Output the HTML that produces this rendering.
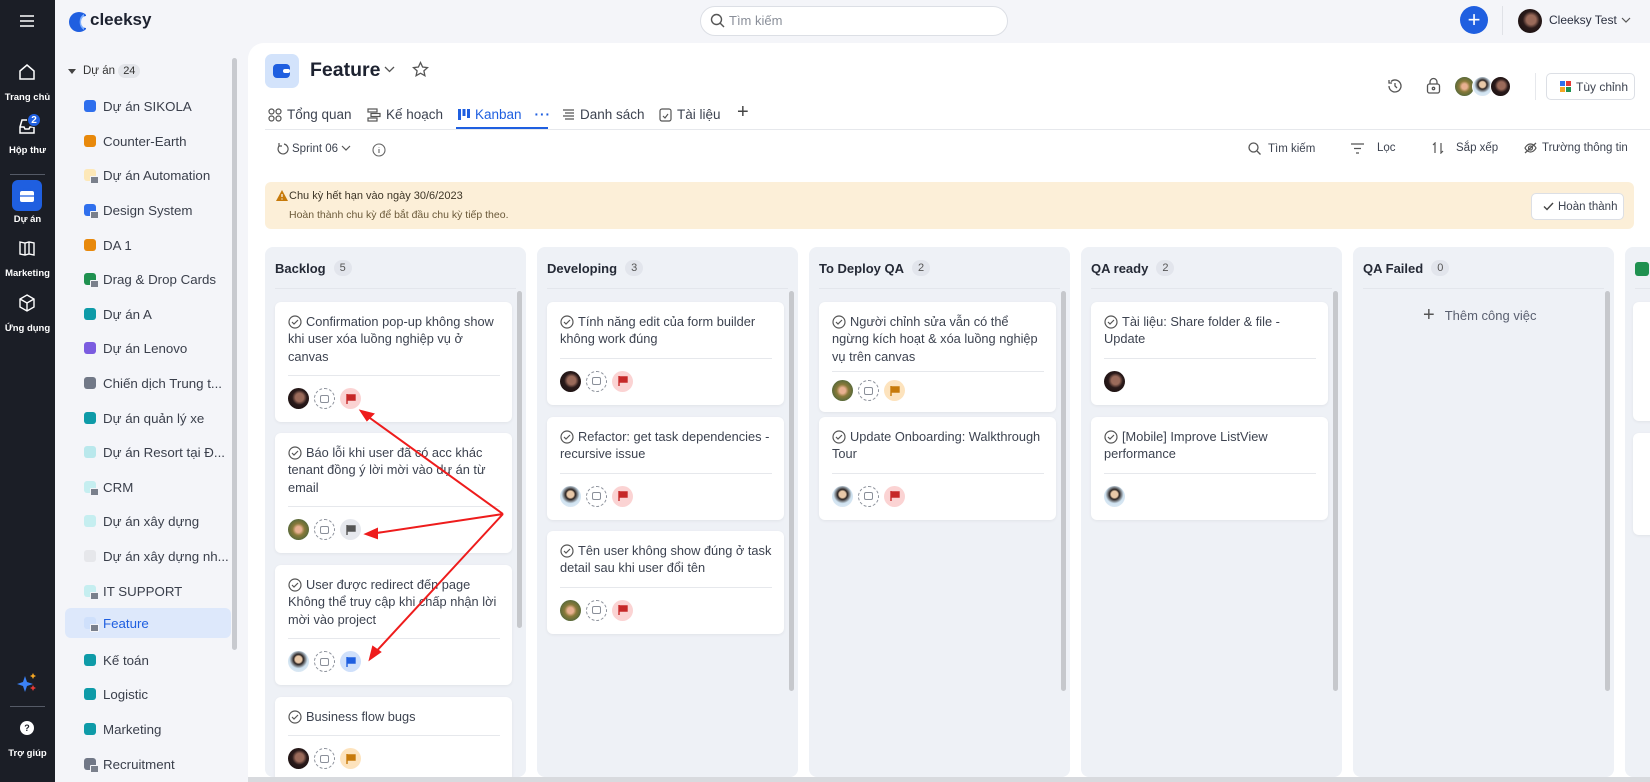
<!DOCTYPE html>
<html><head><meta charset="utf-8">
<style>
*{box-sizing:border-box;margin:0;padding:0}
body{width:1650px;height:782px;overflow:hidden;background:#f4f5f9;font-family:"Liberation Sans","Noto Sans CJK SC",sans-serif;color:#2b3040;position:relative}
.abs{position:absolute}
.dark{left:0;top:0;width:55px;height:782px;background:#1b1e26}
.nav{position:absolute;left:0;width:55px;text-align:center;color:#fff;font-size:9.5px;font-weight:bold}
.proj{position:absolute;left:65px;width:166px;height:30px;display:flex;align-items:center;font-size:13.3px;color:#3a3f4b}
.sq{width:12px;height:12px;border-radius:3px;margin-left:19px;margin-right:7px;position:relative;flex:none}
.sq.l:after{content:"";position:absolute;right:-3px;bottom:-3px;width:7px;height:6px;background:#7a808c;border-radius:1px;border:1px solid #f4f5f9}
.main{left:248px;top:43px;width:1402px;height:739px;background:#fff;border-top-left-radius:16px}
.tab{position:absolute;top:107px;font-size:13.5px;color:#3d4350;display:flex;align-items:center;gap:5px}
.tool{position:absolute;top:142px;font-size:11.5px;color:#3d4350;display:flex;align-items:center;gap:7px}
.col{position:absolute;top:247px;width:261px;height:530px;background:#eef1f6;border-radius:8px;overflow:hidden}
.colh{position:absolute;left:10px;top:13px;font-size:13px;font-weight:bold;color:#252a36;display:flex;align-items:center;gap:8px}
.cnt{background:#e2e5ec;border-radius:10px;font-size:11px;font-weight:normal;color:#555;padding:2px 6px}
.cdiv{position:absolute;left:10px;right:10px;top:41px;height:1px;background:#e3e6ec}
.sb{position:absolute;right:4px;width:5px;background:#c6c8cc;border-radius:3px}
.card{position:absolute;left:10px;width:237px;background:#fff;border-radius:6px;box-shadow:0 1px 3px rgba(0,0,0,.06);padding:11px 12px 13px 13px;overflow:hidden}
.t{font-size:12.8px;line-height:17.4px;color:#3d4350}
.t svg{vertical-align:-3px;margin-right:4px}
.hr{height:1px;background:#e6e8ec;margin:10px 0 12px}
.ic{display:flex;gap:5px;height:21px}
.av{width:21px;height:21px;border-radius:50%}
.a1{background:radial-gradient(circle at 55% 45%,#9a6a5a 0 25%,#2a1a1a 45%,#120c0c)}
.a2{background:radial-gradient(circle at 50% 40%,#e8c8a8 0 20%,#2a2220 30%,#cfe2f0 55%,#e8f0f8)}
.a3{background:radial-gradient(circle at 50% 50%,#e8b090 0 20%,#8a7a3a 40%,#5a6a3a 70%,#a08060)}
.cal{width:21px;height:21px;border-radius:50%;border:1.3px dashed #8a8f99;display:flex;align-items:center;justify-content:center}
.cal i{width:9px;height:8px;border:1.2px solid #8a8f99;border-radius:2px;display:block}
.fl{width:21px;height:21px;border-radius:50%;display:flex;align-items:center;justify-content:center}
.red{background:#fbd3d3}.gray{background:#e6e8ed}.blue{background:#cfe0fb}.yel{background:#fde3bd}
</style></head><body>
<div class="abs dark"></div>
<svg class="abs" style="left:19px;top:14px" width="16" height="14"><path d="M1 2h14M1 7h14M1 12h14" stroke="#fff" stroke-width="1.6"/></svg>
<svg class="abs" style="left:18px;top:63px" width="18" height="18" fill="none" stroke="#fff" stroke-width="1.5"><path d="M2 8L9 2l7 6v8H2z"/></svg>
<div class="nav" style="top:92px">Trang chủ</div>
<svg class="abs" style="left:18px;top:118px" width="18" height="18" fill="none" stroke="#fff" stroke-width="1.5"><path d="M2 9l2-7h10l2 7v6H2zM2 9h4l1 2h4l1-2h4"/></svg>
<div class="abs" style="left:27px;top:113px;width:14px;height:14px;border-radius:50%;background:#1f5fe0;color:#fff;font-size:10px;font-weight:bold;text-align:center;line-height:14px;border:1px solid #1b1e26">2</div>
<div class="nav" style="top:145px">Hộp thư</div>
<div class="abs" style="left:10px;top:174px;width:35px;height:1px;background:#555a66"></div>
<div class="abs" style="left:12px;top:180px;width:30px;height:31px;border-radius:6px;background:#1f5fe0"></div>
<svg class="abs" style="left:19px;top:188px" width="16" height="15"><rect x="1" y="3" width="14" height="11" rx="2" fill="#fff"/><path d="M5 3V1h6v2M1 8h14" stroke="#1f5fe0" stroke-width="1.3" fill="none"/></svg>
<div class="nav" style="top:214px">Dự án</div>
<svg class="abs" style="left:18px;top:239px" width="18" height="18" fill="none" stroke="#fff" stroke-width="1.4"><path d="M2 3l5 1 4-1 5 1v12l-5-1-4 1-5-1zM7 4v12M11 3v12"/></svg>
<div class="nav" style="top:268px">Marketing</div>
<svg class="abs" style="left:18px;top:294px" width="18" height="18" fill="none" stroke="#fff" stroke-width="1.4"><path d="M9 1l7 4v8l-7 4-7-4V5zM2 5l7 4 7-4M9 9v8"/></svg>
<div class="nav" style="top:323px">Ứng dụng</div>
<svg class="abs" style="left:16px;top:672px" width="22" height="22"><path d="M9 4l2 6 6 2-6 2-2 6-2-6-6-2 6-2z" fill="#3b82f6"/><path d="M17 1l1 2 2 1-2 1-1 2-1-2-2-1 2-1z" fill="#f5a623"/><path d="M17 13l1 2 2 1-2 1-1 2-1-2-2-1 2-1z" fill="#e53935"/></svg>
<div class="abs" style="left:10px;top:706px;width:35px;height:1px;background:#555a66"></div>
<div class="abs" style="left:20px;top:721px;width:14px;height:14px;border-radius:50%;background:#fff;color:#1b1e26;font-size:9px;font-weight:bold;text-align:center;line-height:14px">?</div>
<div class="nav" style="top:748px">Trợ giúp</div>

<svg class="abs" style="left:68px;top:10px" width="18" height="24"><circle cx="11" cy="12" r="10" fill="#1f5fe0"/><path d="M16 4a8 9 0 0 0 0 16z" fill="#7fb0ff"/><path d="M18 6a5 6 0 0 0 0 12z" fill="#f4f5f9"/></svg>
<div class="abs" style="left:90px;top:10px;font-size:17px;font-weight:bold;color:#1d2230">cleeksy</div>
<div class="abs" style="left:700px;top:6px;width:308px;height:30px;border:1px solid #dcdfe5;border-radius:15px;background:#fff"></div>
<svg class="abs" style="left:710px;top:13px" width="15" height="15" fill="none" stroke="#555" stroke-width="1.4"><circle cx="6.5" cy="6.5" r="5"/><path d="M10 10l4 4"/></svg>
<div class="abs" style="left:729px;top:13px;font-size:13px;color:#8a8f99">Tìm kiếm</div>
<div class="abs" style="left:1460px;top:6px;width:28px;height:28px;border-radius:50%;background:#1f5fe0;color:#fff;font-size:22px;text-align:center;line-height:27px">+</div>
<div class="abs" style="left:1502px;top:6px;width:1px;height:29px;background:#e0e2e7"></div>
<div class="abs av a1" style="left:1518px;top:9px;width:24px;height:24px"></div>
<div class="abs" style="left:1549px;top:13px;font-size:12px;color:#2b3040">Cleeksy Test</div>
<svg class="abs" style="left:1621px;top:16px" width="10" height="8" fill="none" stroke="#555" stroke-width="1.2"><path d="M1 2l4 4 4-4"/></svg>

<svg class="abs" style="left:68px;top:69px" width="8" height="6"><path d="M0 0h8L4 5z" fill="#444"/></svg>
<div class="abs" style="left:83px;top:65px;font-size:11.5px;color:#333">Dự án <span style="background:#e3e5ea;border-radius:8px;padding:1px 5px;font-size:11px">24</span></div>
<div class="abs" style="left:232px;top:58px;width:5px;height:592px;background:#c8cacf;border-radius:3px"></div>
<div class="abs" style="left:65px;top:608px;width:166px;height:30px;background:#dde8fb;border-radius:6px"></div>

<div class="proj" style="top:91px"><span class="sq" style="background:#2f6fed"></span>Dự án SIKOLA</div>
<div class="proj" style="top:126px"><span class="sq" style="background:#e8890c"></span>Counter-Earth</div>
<div class="proj" style="top:160px"><span class="sq l" style="background:#fde8b8"></span>Dự án Automation</div>
<div class="proj" style="top:195px"><span class="sq l" style="background:#2f6fed"></span>Design System</div>
<div class="proj" style="top:230px"><span class="sq" style="background:#e8890c"></span>DA 1</div>
<div class="proj" style="top:264px"><span class="sq l" style="background:#1f9150"></span>Drag &amp; Drop Cards</div>
<div class="proj" style="top:299px"><span class="sq" style="background:#0e9ba8"></span>Dự án A</div>
<div class="proj" style="top:333px"><span class="sq" style="background:#7b5ce0"></span>Dự án Lenovo</div>
<div class="proj" style="top:368px"><span class="sq" style="background:#717887"></span>Chiến dịch Trung t...</div>
<div class="proj" style="top:403px"><span class="sq" style="background:#0e9ba8"></span>Dự án quản lý xe</div>
<div class="proj" style="top:437px"><span class="sq" style="background:#b9e8ec"></span>Dự án Resort tại Đ...</div>
<div class="proj" style="top:472px"><span class="sq l" style="background:#c5eef0"></span>CRM</div>
<div class="proj" style="top:506px"><span class="sq" style="background:#c5eef0"></span>Dự án xây dựng</div>
<div class="proj" style="top:541px"><span class="sq" style="background:#e6e7eb"></span>Dự án xây dựng nh...</div>
<div class="proj" style="top:576px"><span class="sq l" style="background:#c5eef0"></span>IT SUPPORT</div>
<div class="proj" style="top:608px;color:#1f5fe0"><span class="sq l" style="background:#cfe0fb"></span>Feature</div>
<div class="proj" style="top:645px"><span class="sq" style="background:#0e9ba8"></span>Kế toán</div>
<div class="proj" style="top:679px"><span class="sq" style="background:#0e9ba8"></span>Logistic</div>
<div class="proj" style="top:714px"><span class="sq" style="background:#0e9ba8"></span>Marketing</div>
<div class="proj" style="top:749px"><span class="sq l" style="background:#717887"></span>Recruitment</div>

<div class="abs main"></div>
<div class="abs" style="left:265px;top:54px;width:34px;height:34px;border-radius:7px;background:#d3e3fb"></div>
<svg class="abs" style="left:272px;top:62px" width="20" height="18"><rect x="1" y="2" width="17" height="14" rx="4" fill="#1f5fe0"/><rect x="11" y="7" width="7" height="4" rx="2" fill="#fff"/></svg>
<div class="abs" style="left:310px;top:59px;font-size:19.5px;font-weight:bold;color:#1d2230">Feature</div>
<svg class="abs" style="left:384px;top:66px" width="11" height="8" fill="none" stroke="#555" stroke-width="1.3"><path d="M1 1l4.5 4.5L10 1"/></svg>
<svg class="abs" style="left:412px;top:61px" width="17" height="17" fill="none" stroke="#555" stroke-width="1.3"><path d="M8.5 1.5l2.1 4.5 4.9.6-3.6 3.3 1 4.8-4.4-2.5-4.4 2.5 1-4.8L1.5 6.6l4.9-.6z"/></svg>

<svg class="abs" style="left:1387px;top:78px" width="16" height="16" fill="none" stroke="#555" stroke-width="1.3"><path d="M2 8a6 6 0 1 0 2-4.5M2 2v3h3M8 5v3l2 2"/></svg>
<svg class="abs" style="left:1426px;top:77px" width="15" height="17" fill="none" stroke="#555" stroke-width="1.3"><rect x="1.5" y="7" width="12" height="9" rx="2"/><path d="M4 7V5a3.5 3.5 0 0 1 7 0v2"/><circle cx="7.5" cy="11.5" r="1.2"/></svg>
<div class="abs av a3" style="left:1454px;top:76px;width:21px;height:21px;border:1px solid #fff"></div>
<div class="abs av a2" style="left:1472px;top:76px;width:21px;height:21px;border:1px solid #fff"></div>
<div class="abs av a1" style="left:1490px;top:76px;width:21px;height:21px;border:1px solid #fff"></div>
<div class="abs" style="left:1535px;top:73px;width:1px;height:27px;background:#e6e8ec"></div>
<div class="abs" style="left:1546px;top:73px;width:89px;height:27px;border:1px solid #dcdfe5;border-radius:5px;font-size:12px;color:#3d4350;display:flex;align-items:center;gap:5px;padding-left:13px">
<svg width="11" height="11"><rect width="5" height="5" fill="#2f6fed"/><rect x="6" width="5" height="5" fill="#e53935"/><rect y="6" width="5" height="5" fill="#f5a623"/><rect x="6" y="6" width="5" height="5" fill="#1f9150"/></svg>Tùy chỉnh</div>

<div class="tab" style="left:268px"><svg width="14" height="14" fill="none" stroke="#555" stroke-width="1.2"><circle cx="3.5" cy="3.5" r="2.5"/><circle cx="10.5" cy="3.5" r="2.5"/><circle cx="3.5" cy="10.5" r="2.5"/><circle cx="10.5" cy="10.5" r="2.5"/></svg>Tổng quan</div>
<div class="tab" style="left:367px"><svg width="14" height="14" fill="none" stroke="#555" stroke-width="1.2"><rect x="1" y="1" width="9" height="3"/><rect x="4" y="5.5" width="9" height="3"/><rect x="1" y="10" width="9" height="3"/></svg>Kế hoạch</div>
<div class="tab" style="left:458px;color:#1f5fe0"><svg width="12" height="13"><rect x="0" y="1" width="3" height="11" fill="#1f5fe0"/><rect x="4.5" y="1" width="3" height="7" fill="#1f5fe0"/><rect x="9" y="1" width="3" height="9" fill="#1f5fe0"/></svg>Kanban<span style="margin-left:8px;font-weight:bold;letter-spacing:1px">···</span></div>
<div class="abs" style="left:456px;top:127px;width:92px;height:2px;background:#1f5fe0"></div>
<div class="tab" style="left:562px"><svg width="13" height="14" fill="none" stroke="#555" stroke-width="1.2"><path d="M1 2h11M3 5h9M1 8h11M3 11h9"/></svg>Danh sách</div>
<div class="tab" style="left:659px"><svg width="13" height="14" fill="none" stroke="#555" stroke-width="1.2"><rect x="1" y="1" width="11" height="12" rx="2"/><path d="M4 8l2 2 3-4"/></svg>Tài liệu</div>
<div class="tab" style="left:737px;font-size:20px;top:101px;color:#444">+</div>
<div class="abs" style="left:265px;top:129px;width:1385px;height:1px;background:#e6e8ec"></div>

<div class="tool" style="left:276px;gap:3px"><svg width="13" height="13" fill="none" stroke="#555" stroke-width="1.2"><path d="M3 4a5 5 0 1 0 5-2M3 1v3h3"/></svg>Sprint 06 <svg width="10" height="7" fill="none" stroke="#555" stroke-width="1.2"><path d="M1 1l4 4 4-4"/></svg></div>
<svg class="abs" style="left:372px;top:143px" width="14" height="14" fill="none" stroke="#666" stroke-width="1.1"><circle cx="7" cy="7" r="6"/><path d="M7 6v4M7 4v.5"/></svg>
<div class="tool" style="left:1248px"><svg width="13" height="13" fill="none" stroke="#555" stroke-width="1.3"><circle cx="5.5" cy="5.5" r="4.5"/><path d="M9 9l3.5 3.5"/></svg>Tìm kiếm</div>
<div class="tool" style="left:1351px;gap:13px"><svg width="13" height="11" fill="none" stroke="#555" stroke-width="1.3"><path d="M0 1h13M3 5.5h7M5 10h3"/></svg>Lọc</div>
<div class="tool" style="left:1432px;gap:12px"><svg width="12" height="12" fill="none" stroke="#555" stroke-width="1.2"><path d="M3 11V1L1 3M9 1v10l2-2"/></svg>Sắp xếp</div>
<div class="tool" style="left:1524px;gap:5px"><svg width="13" height="12" fill="none" stroke="#555" stroke-width="1.2"><path d="M1 6s2-4 5.5-4S12 6 12 6s-2 4-5.5 4S1 6 1 6z"/><circle cx="6.5" cy="6" r="2"/><path d="M1 11L12 1"/></svg>Trường thông tin</div>

<div class="abs" style="left:265px;top:182px;width:1369px;height:47px;background:#fcefd8;border-radius:6px"></div>
<svg class="abs" style="left:276px;top:190px" width="12" height="11"><path d="M6 0l6 11H0z" fill="#c77a0a"/><path d="M6 4v3M6 8.5v1" stroke="#fff" stroke-width="1.2"/></svg>
<div class="abs" style="left:289px;top:190px;font-size:11px;color:#3d3526">Chu kỳ hết hạn vào ngày 30/6/2023</div>
<div class="abs" style="left:289px;top:209px;font-size:10.5px;color:#6b5a3a">Hoàn thành chu kỳ để bắt đầu chu kỳ tiếp theo.</div>
<div class="abs" style="left:1531px;top:193px;width:93px;height:27px;background:#fff;border:1px solid #dcdfe5;border-radius:5px;font-size:11.5px;color:#3d4350;display:flex;align-items:center;padding-left:11px;gap:4px"><svg width="11" height="9" fill="none" stroke="#444" stroke-width="1.4"><path d="M1 4.5l3 3L10 1"/></svg>Hoàn thành</div>

<div class="col" style="left:265px"><div class="colh">Backlog <span class="cnt">5</span></div><div class="cdiv"></div><div class="sb" style="top:44px;height:337px"></div>
<div class="card" style="top:55px"><div class="t"><svg width="14" height="14" fill="none" stroke="#555" stroke-width="1.2"><circle cx="7" cy="7" r="6"/><path d="M4 7l2 2 4-4"/></svg>Confirmation pop-up không show khi user xóa luồng nghiệp vụ ở canvas</div><div class="hr"></div><div class="ic"><div class="av a1"></div><div class="cal"><i></i></div><div class="fl red"><svg width="10" height="10"><path d="M1 0v10M1 1h8v5H1" fill="#c62828" stroke="#c62828" stroke-width="1.4"/></svg></div></div></div>
<div class="card" style="top:186px"><div class="t"><svg width="14" height="14" fill="none" stroke="#555" stroke-width="1.2"><circle cx="7" cy="7" r="6"/><path d="M4 7l2 2 4-4"/></svg>Báo lỗi khi user đã có acc khác tenant đồng ý lời mời vào dự án từ email</div><div class="hr"></div><div class="ic"><div class="av a3"></div><div class="cal"><i></i></div><div class="fl gray"><svg width="10" height="10"><path d="M1 0v10M1 1h8v5H1" fill="#555" stroke="#555" stroke-width="1.4"/></svg></div></div></div>
<div class="card" style="top:318px"><div class="t"><svg width="14" height="14" fill="none" stroke="#555" stroke-width="1.2"><circle cx="7" cy="7" r="6"/><path d="M4 7l2 2 4-4"/></svg>User được redirect đến page Không thể truy cập khi chấp nhận lời mời vào project</div><div class="hr"></div><div class="ic"><div class="av a2"></div><div class="cal"><i></i></div><div class="fl blue"><svg width="10" height="10"><path d="M1 0v10M1 1h8v5H1" fill="#1f5fe0" stroke="#1f5fe0" stroke-width="1.4"/></svg></div></div></div>
<div class="card" style="top:450px"><div class="t"><svg width="14" height="14" fill="none" stroke="#555" stroke-width="1.2"><circle cx="7" cy="7" r="6"/><path d="M4 7l2 2 4-4"/></svg>Business flow bugs</div><div class="hr"></div><div class="ic"><div class="av a1"></div><div class="cal"><i></i></div><div class="fl yel"><svg width="10" height="10"><path d="M1 0v10M1 1h8v5H1" fill="#c77a0a" stroke="#c77a0a" stroke-width="1.4"/></svg></div></div></div>
</div>

<div class="col" style="left:537px"><div class="colh">Developing <span class="cnt">3</span></div><div class="cdiv"></div><div class="sb" style="top:44px;height:400px"></div>
<div class="card" style="top:55px"><div class="t"><svg width="14" height="14" fill="none" stroke="#555" stroke-width="1.2"><circle cx="7" cy="7" r="6"/><path d="M4 7l2 2 4-4"/></svg>Tính năng edit của form builder không work đúng</div><div class="hr"></div><div class="ic"><div class="av a1"></div><div class="cal"><i></i></div><div class="fl red"><svg width="10" height="10"><path d="M1 0v10M1 1h8v5H1" fill="#c62828" stroke="#c62828" stroke-width="1.4"/></svg></div></div></div>
<div class="card" style="top:170px"><div class="t"><svg width="14" height="14" fill="none" stroke="#555" stroke-width="1.2"><circle cx="7" cy="7" r="6"/><path d="M4 7l2 2 4-4"/></svg>Refactor: get task dependencies - recursive issue</div><div class="hr"></div><div class="ic"><div class="av a2"></div><div class="cal"><i></i></div><div class="fl red"><svg width="10" height="10"><path d="M1 0v10M1 1h8v5H1" fill="#c62828" stroke="#c62828" stroke-width="1.4"/></svg></div></div></div>
<div class="card" style="top:284px"><div class="t"><svg width="14" height="14" fill="none" stroke="#555" stroke-width="1.2"><circle cx="7" cy="7" r="6"/><path d="M4 7l2 2 4-4"/></svg>Tên user không show đúng ở task detail sau khi user đổi tên</div><div class="hr"></div><div class="ic"><div class="av a3"></div><div class="cal"><i></i></div><div class="fl red"><svg width="10" height="10"><path d="M1 0v10M1 1h8v5H1" fill="#c62828" stroke="#c62828" stroke-width="1.4"/></svg></div></div></div>
</div>

<div class="col" style="left:809px"><div class="colh">To Deploy QA <span class="cnt">2</span></div><div class="cdiv"></div><div class="sb" style="top:44px;height:400px"></div>
<div class="card" style="top:55px;height:110px"><div class="t"><svg width="14" height="14" fill="none" stroke="#555" stroke-width="1.2"><circle cx="7" cy="7" r="6"/><path d="M4 7l2 2 4-4"/></svg>Người chỉnh sửa vẫn có thể ngừng kích hoạt &amp; xóa luồng nghiệp vụ trên canvas</div><div class="hr" style="margin:6px 0 8px"></div><div class="ic"><div class="av a3"></div><div class="cal"><i></i></div><div class="fl yel"><svg width="10" height="10"><path d="M1 0v10M1 1h8v5H1" fill="#c77a0a" stroke="#c77a0a" stroke-width="1.4"/></svg></div></div></div>
<div class="card" style="top:170px"><div class="t"><svg width="14" height="14" fill="none" stroke="#555" stroke-width="1.2"><circle cx="7" cy="7" r="6"/><path d="M4 7l2 2 4-4"/></svg>Update Onboarding: Walkthrough Tour</div><div class="hr"></div><div class="ic"><div class="av a2"></div><div class="cal"><i></i></div><div class="fl red"><svg width="10" height="10"><path d="M1 0v10M1 1h8v5H1" fill="#c62828" stroke="#c62828" stroke-width="1.4"/></svg></div></div></div>
</div>

<div class="col" style="left:1081px"><div class="colh">QA ready <span class="cnt">2</span></div><div class="cdiv"></div><div class="sb" style="top:44px;height:400px"></div>
<div class="card" style="top:55px"><div class="t"><svg width="14" height="14" fill="none" stroke="#555" stroke-width="1.2"><circle cx="7" cy="7" r="6"/><path d="M4 7l2 2 4-4"/></svg>Tài liệu: Share folder &amp; file - Update</div><div class="hr"></div><div class="ic"><div class="av a1"></div></div></div>
<div class="card" style="top:170px"><div class="t"><svg width="14" height="14" fill="none" stroke="#555" stroke-width="1.2"><circle cx="7" cy="7" r="6"/><path d="M4 7l2 2 4-4"/></svg>[Mobile] Improve ListView performance</div><div class="hr"></div><div class="ic"><div class="av a2"></div></div></div>
</div>

<div class="col" style="left:1353px"><div class="colh">QA Failed <span class="cnt">0</span></div><div class="cdiv"></div><div class="sb" style="top:44px;height:400px"></div>
<div class="abs" style="left:70px;top:57px;font-size:13px;color:#5a6070;display:flex;align-items:center;gap:10px"><span style="font-size:20px;color:#555">+</span>Thêm công việc</div>
</div>

<div class="col" style="left:1625px;width:40px"><div class="abs" style="left:10px;top:15px;width:14px;height:14px;border-radius:3px;background:#1f9150"></div><div class="cdiv"></div>
<div class="card" style="top:55px;left:8px;height:119px"></div><div class="card" style="top:186px;left:8px;height:102px"></div></div>

<div class="abs" style="left:248px;top:777px;width:1402px;height:5px;background:#d8dade"></div>

<svg class="abs" style="left:0;top:0;pointer-events:none" width="1650" height="782">
<g stroke="#ee1c1c" stroke-width="2" fill="#ee1c1c">
<path d="M503 514L363 413M503 514L370 534M503 514L372 656" fill="none"/>
<path d="M361 411l12 3-6 6z"/><path d="M366 534l11-5 0 9z"/><path d="M370 659l3-12 7 5z"/>
</g></svg>
</body></html>
